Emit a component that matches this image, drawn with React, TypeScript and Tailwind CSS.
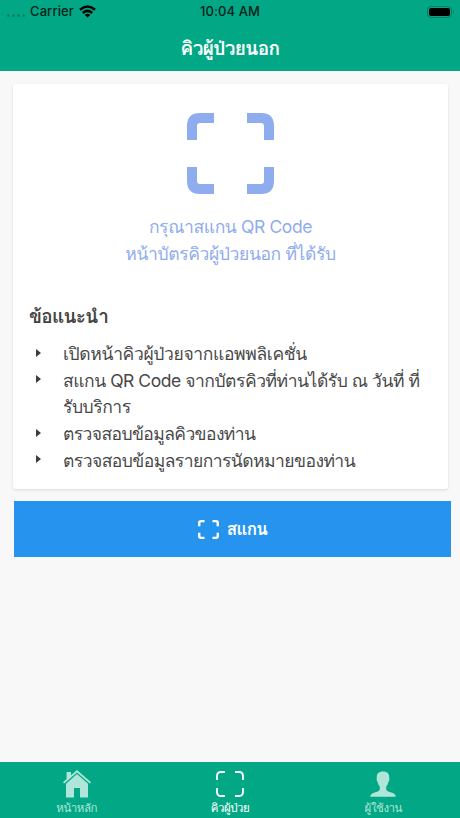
import type { ReactNode } from 'react';

function ScanFrame({ className }: { className: string }) {
  return (
    <svg viewBox="0 0 87 81" preserveAspectRatio="none" className={className} fill="currentColor" aria-hidden="true">
      <path d="M0 27V13Q0 0 13 0H27V10H13Q10 10 10 13V27Z" />
      <path d="M60 0H74Q87 0 87 13V27H77V13Q77 10 74 10H60Z" />
      <path d="M0 54V68Q0 81 13 81H27V71H13Q10 71 10 68V54Z" />
      <path d="M87 54V68Q87 81 74 81H60V71H74Q77 71 77 68V54Z" />
    </svg>
  );
}

function ThinScanFrame() {
  return (
    <svg viewBox="0 0 28 26" className="h-[26px] w-7" fill="none" stroke="currentColor" strokeWidth="1.8" aria-hidden="true">
      <path d="M1 9V5Q1 1 5 1H9M19 1H23Q27 1 27 5V9M27 17V21Q27 25 23 25H19M9 25H5Q1 25 1 21V17" />
    </svg>
  );
}

function HomeIcon() {
  return (
    <svg viewBox="0 0 28 28" className="h-7 w-7" fill="currentColor" aria-hidden="true">
      <path d="M14 0L28 12.3L26.8 13.600L14 2.400L1.200 13.600L0 12.300L3.600 9.100V2H8V5.300Z" />
      <path d="M14 4L25 13.700V27.500H17V18H11V27.500H3V13.700Z" />
    </svg>
  );
}

function PersonIcon() {
  return (
    <svg viewBox="0 0 26 26" className="h-[26px] w-[26px]" fill="currentColor" aria-hidden="true">
      <path d="M13 .5C8.500 .5 6.300 3 6.800 7.200C6.300 8 6.800 10.300 7.700 11C8.100 13.200 8.800 14.600 9.800 15.600V18.500C9.300 20.600 5.600 21 2.800 22.200C1 23 .5 24 .3 25.700H25.700C25.500 24 25 23 23.200 22.200C20.400 21 16.700 20.600 16.200 18.500V15.600C17.200 14.600 17.900 13.200 18.300 11C19.200 10.300 19.700 8 19.200 7.200C19.700 3 17.500 .5 13 .5Z" />
    </svg>
  );
}

function StatusBar() {
  return (
    <div className="relative flex h-[23px] items-center justify-between pl-[7px] pr-1.5 text-[13px] font-medium text-[#03211a]">
      <div className="flex items-center">
        <div className="mt-[7px] flex gap-[2px]">
          {[0, 1, 2, 3].map((dot) => (
            <span key={dot} className="h-[3px] w-[3px] rounded-full bg-[#078267]" />
          ))}
        </div>
        <span className="ml-[5px] w-11 tracking-[0.1px]">Carrier</span>
        <svg viewBox="0 0 17 13" className="ml-[5px] -mt-px h-[13px] w-[17px] text-black" fill="none" stroke="currentColor" strokeWidth="2.6" aria-hidden="true">
          <path d="M1 4.700Q8.500-1.700 16 4.700M3.800 7.900Q8.500 4 13.200 7.900" />
          <path d="M5.700 9.900Q8.500 7.700 11.300 9.900L8.500 12.600Z" fill="currentColor" stroke="none" />
        </svg>
      </div>
      <span className="absolute inset-x-0 text-center tracking-[0.1px]">10:04 AM</span>
      <div className="flex items-center gap-px">
        <div className="h-3 w-[25px] rounded-[4px] border border-[#087b63] p-px">
          <div className="h-full rounded-[2px] bg-black" />
        </div>
        <span className="h-1 w-[1.5px] rounded-r bg-[#087b63]" />
      </div>
    </div>
  );
}

function Tip({ children, tracking }: { children: ReactNode; tracking: string }) {
  return (
    <li className="flex">
      <span className="ml-[7px] mt-[7.500px] h-0 w-0 border-y-[4.500px] border-l-[5px] border-y-transparent border-l-[#3c3c3c]" />
      <span className={`ml-[22px] whitespace-nowrap ${tracking}`}>{children}</span>
    </li>
  );
}

function Tab({ icon, label, active = false }: { icon: ReactNode; label: string; active?: boolean }) {
  return (
    <div className={`flex flex-1 flex-col items-center pt-[7px] ${active ? 'text-white' : 'text-[#b0e5da]'}`}>
      <div className="flex h-[29px] items-center">{icon}</div>
      <span className="mt-[2px] text-[11.5px] leading-[17px] tracking-[-0.45px]">{label}</span>
    </div>
  );
}

export default function App() {
  return (
    <div className="flex h-[818px] w-[460px] flex-col bg-[#f8f8f8] font-['Inter','Loma',sans-serif]">
      <header className="h-[71px] bg-[#02a885]">
        <StatusBar />
        <h1 className="pt-[12px] text-center text-[19px] font-bold leading-7 tracking-[-0.6px] text-white">คิวผู้ป่วยนอก</h1>
      </header>
      <main className="flex-1 pl-[13px] pr-[9px] pt-[13px]">
        <section className="mr-[3px] h-[405px] rounded-[3px] bg-white pl-4 pt-[29px] shadow-[0_1px_3px_rgba(0,0,0,0.12)]">
          <div className="flex flex-col items-center pr-4 text-[#8facee]">
            <ScanFrame className="h-[81px] w-[87px]" />
            <p className="mt-[20px] text-center text-[17.5px] leading-[26.5px] tracking-[-0.38px]">กรุณาสแกน QR Code<br />หน้าบัตรคิวผู้ป่วยนอก ที่ได้รับ</p>
          </div>
          <h2 className="mt-[36px] text-[19px] font-bold leading-7 tracking-[-0.7px] text-[#444]">ข้อแนะนำ</h2>
          <ul className="mt-[10px] text-[17.5px] leading-[26.7px] text-[#484848]">
            <Tip tracking="tracking-[-0.36px]">เปิดหน้าคิวผู้ป่วยจากแอพพลิเคชั่น</Tip>
            <Tip tracking="tracking-[-0.46px]">สแกน QR Code จากบัตรคิวที่ท่านได้รับ ณ วันที่ ที่<br />รับบริการ</Tip>
            <Tip tracking="tracking-[-0.6px]">ตรวจสอบข้อมูลคิวของท่าน</Tip>
            <Tip tracking="tracking-[-0.55px]">ตรวจสอบข้อมูลรายการนัดหมายของท่าน</Tip>
          </ul>
        </section>
        <button className="ml-px mt-3 flex h-14 w-[437px] items-center justify-center gap-2 bg-[#2694ee] text-[17px] font-bold tracking-[-0.7px] text-white">
          <ScanFrame className="h-[19px] w-[21px]" />
          <span className="mt-px">สแกน</span>
        </button>
      </main>
      <nav className="flex h-14 bg-[#02a885]">
        <Tab icon={<HomeIcon />} label="หน้าหลัก" />
        <Tab icon={<ThinScanFrame />} label="คิวผู้ป่วย" active />
        <Tab icon={<PersonIcon />} label="ผู้ใช้งาน" />
      </nav>
    </div>
  );
}
